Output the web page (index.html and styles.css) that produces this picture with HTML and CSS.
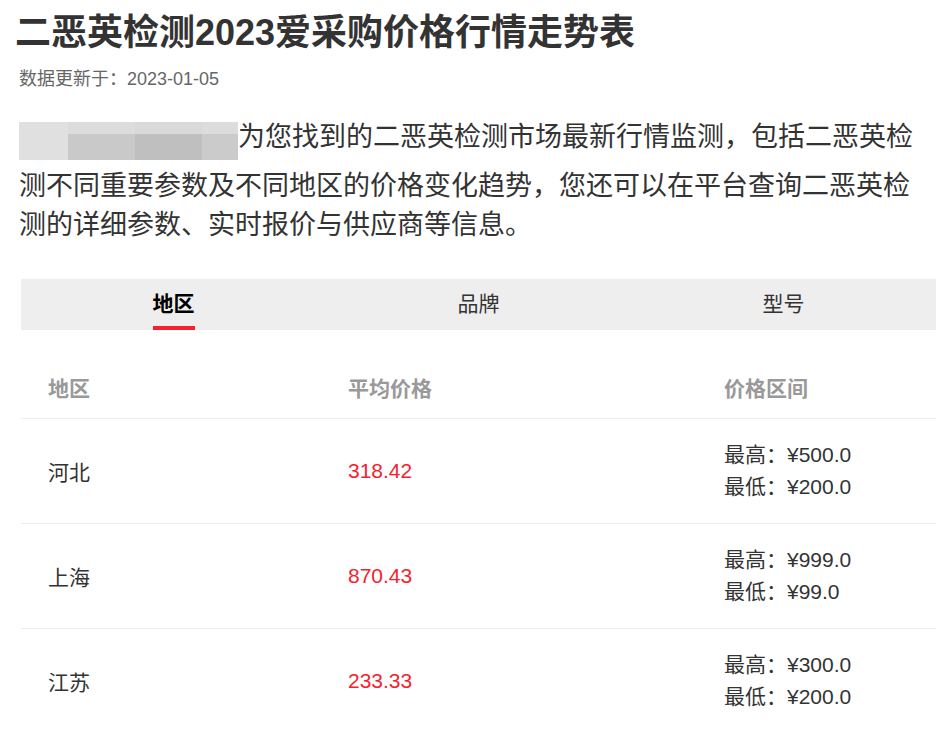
FILE: index.html
```html
<!DOCTYPE html>
<html lang="zh-CN">
<head>
<meta charset="utf-8">
<title>二恶英检测2023爱采购价格行情走势表</title>
<link rel="stylesheet" href="styles.css">
</head>
<body>
<div class="page">
  <h1 class="title">二恶英检测2023爱采购价格行情走势表</h1>
  <div class="date">数据更新于：2023-01-05</div>
  <p class="intro"><span class="mosaic"><span class="m m1"></span><span class="m m2"><i class="t"></i><i class="b"></i></span><span class="m m3"><i class="t"></i><i class="b"></i></span><span class="m m4"><i class="t"></i><i class="b"></i></span></span>为您找到的二恶英检测市场最新行情监测，包括二恶英检测不同重要参数及不同地区的价格变化趋势，您还可以在平台查询二恶英检测的详细参数、实时报价与供应商等信息。</p>
  <div class="tabs">
    <div class="tab active"><span>地区</span></div>
    <div class="tab"><span>品牌</span></div>
    <div class="tab"><span>型号</span></div>
  </div>
  <div class="table">
    <div class="row head">
      <div class="c1">地区</div>
      <div class="c2">平均价格</div>
      <div class="c3">价格区间</div>
    </div>
    <div class="row">
      <div class="c1">河北</div>
      <div class="c2 price">318.42</div>
      <div class="c3"><div>最高：¥500.0</div><div>最低：¥200.0</div></div>
    </div>
    <div class="row">
      <div class="c1">上海</div>
      <div class="c2 price">870.43</div>
      <div class="c3"><div>最高：¥999.0</div><div>最低：¥99.0</div></div>
    </div>
    <div class="row">
      <div class="c1">江苏</div>
      <div class="c2 price">233.33</div>
      <div class="c3"><div>最高：¥300.0</div><div>最低：¥200.0</div></div>
    </div>
  </div>
</div>
</body>
</html>
```
FILE: styles.css
```css
html, body {
  margin: 0;
  padding: 0;
  background: #fff;
}
body {
  font-family: "Liberation Sans", "Noto Sans CJK SC", sans-serif;
  color: #333;
}
.page {
  padding: 13px 12px 0 19px;
}
.title {
  margin: 0 0 0 -4px;
  font-size: 36px;
  font-weight: bold;
  line-height: 40px;
  color: #333;
}
.date {
  margin-top: 15px;
  font-size: 18px;
  line-height: 22px;
  color: #666;
}
.intro {
  margin: 28px 6px 0 0;
  font-size: 27px;
  line-height: 38.5px;
  color: #333;
}
.mosaic {
  display: inline-flex;
  width: 219px;
  height: 38px;
  vertical-align: -14px;
  margin-bottom: 7px;
}
.m {
  display: flex;
  flex-direction: column;
}
.m .t { display: block; height: 12px; }
.m .b { display: block; flex: 1; }
.m1 { width: 49px; background: #e0e0e0; }
.m2 { width: 67px; }
.m2 .t { background: #dcdcdc; }
.m2 .b { background: #c9c9c9; }
.m3 { width: 67px; }
.m3 .t { background: #d9d9d9; }
.m3 .b { background: #bfbfbf; }
.m4 { width: 36px; }
.m4 .t { background: #dcdcdc; }
.m4 .b { background: #cbcbcb; }
.tabs {
  display: flex;
  margin: 35px 0 0 2px;
  height: 51px;
  background: #eee;
}
.tab {
  flex: 1;
  display: flex;
  justify-content: center;
}
.tab span {
  display: block;
  font-size: 21px;
  line-height: 49px;
  color: #333;
  border-bottom: 4px solid transparent;
  height: 47px;
}
.tab.active span {
  font-weight: bold;
  color: #000;
  border-bottom-color: #f5222d;
}
.table {
  margin: 30px 0 0 2px;
}
.row {
  display: grid;
  grid-template-columns: 300px 376px 1fr;
  border-bottom: 1px solid #eee;
  height: 104px;
  align-items: center;
  font-size: 21px;
  color: #333;
}
.row.head {
  height: 58px;
  font-weight: bold;
  color: #999;
  align-items: start;
}
.row.head > div {
  line-height: 58px;
}
.c1, .c2, .c3 {
  padding-left: 27px;
}
.c3 div {
  line-height: 32px;
}
.price {
  color: #f5222d;
}
```
